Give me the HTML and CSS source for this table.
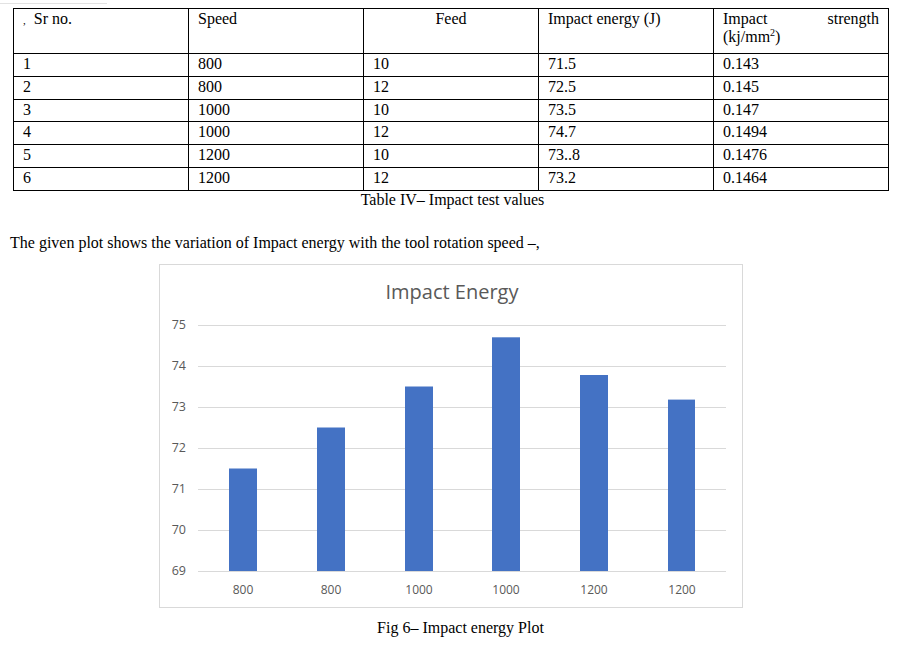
FILE: index.html
```html
<!DOCTYPE html>
<html>
<head>
<meta charset="utf-8">
<link rel="stylesheet" href="styles.css">
</head>
<body>
<div class="topline"></div>
<div class="table-wrap">
  <table class="data">
    <colgroup><col><col><col><col><col></colgroup>
    <tr class="head">
      <td><span class="comma">,</span>&nbsp; Sr no.</td>
      <td>Speed</td>
      <td class="center">Feed</td>
      <td>Impact energy (J)</td>
      <td class="just">Impact strength<br>(kj/mm<sup>2</sup>)</td>
    </tr>
    <tr><td>1</td><td>800</td><td>10</td><td>71.5</td><td>0.143</td></tr>
    <tr><td>2</td><td>800</td><td>12</td><td>72.5</td><td>0.145</td></tr>
    <tr><td>3</td><td>1000</td><td>10</td><td>73.5</td><td>0.147</td></tr>
    <tr><td>4</td><td>1000</td><td>12</td><td>74.7</td><td>0.1494</td></tr>
    <tr><td>5</td><td>1200</td><td>10</td><td>73..8</td><td>0.1476</td></tr>
    <tr><td>6</td><td>1200</td><td>12</td><td>73.2</td><td>0.1464</td></tr>
  </table>
  <div class="caption">Table IV– Impact test values</div>
</div>
<p class="para">The given plot shows the variation of Impact energy with the tool rotation speed –,</p>
<div class="chart">
  <svg width="582" height="342" viewBox="0 0 582 342">
    <text class="title" x="292" y="34" text-anchor="middle">Impact Energy</text>
    <g class="grid">
      <line x1="38" y1="60.5" x2="566" y2="60.5"/>
      <line x1="38" y1="101.5" x2="566" y2="101.5"/>
      <line x1="38" y1="142.5" x2="566" y2="142.5"/>
      <line x1="38" y1="183.5" x2="566" y2="183.5"/>
      <line x1="38" y1="224.5" x2="566" y2="224.5"/>
      <line x1="38" y1="265.5" x2="566" y2="265.5"/>
      <line x1="38" y1="306.5" x2="566" y2="306.5"/>
    </g>
    <g class="ylab" text-anchor="end">
      <text x="26" y="64">75</text>
      <text x="26" y="105">74</text>
      <text x="26" y="146">73</text>
      <text x="26" y="187">72</text>
      <text x="26" y="228">71</text>
      <text x="26" y="269">70</text>
      <text x="26" y="310">69</text>
    </g>
    <g class="bars">
      <rect x="69" y="203.5" width="28" height="102.5"/>
      <rect x="157" y="162.5" width="28" height="143.5"/>
      <rect x="245" y="121.5" width="28" height="184.5"/>
      <rect x="332" y="72.3" width="28" height="233.7"/>
      <rect x="420" y="110" width="28" height="196"/>
      <rect x="508" y="134.6" width="27" height="171.4"/>
    </g>
    <g class="xlab" text-anchor="middle">
      <text x="83" y="329">800</text>
      <text x="171" y="329">800</text>
      <text x="259" y="329">1000</text>
      <text x="346" y="329">1000</text>
      <text x="434" y="329">1200</text>
      <text x="522" y="329">1200</text>
    </g>
  </svg>
</div>
<div class="figcap">Fig 6– Impact energy Plot</div>
</body>
</html>
```
FILE: styles.css
```css
html, body {
  margin: 0;
  padding: 0;
  background: #ffffff;
}
body {
  font-family: "Liberation Serif", "Times New Roman", serif;
  font-size: 16px;
  line-height: 18.4px;
  color: #000;
}
.topline {
  width: 107px;
  height: 0;
  margin-top: 3px;
  border-top: 1px solid #e2e2e2;
}
.table-wrap {
  margin: 4px 0 0 13px;
  width: 876px;
}
.data {
  border-collapse: collapse;
  table-layout: fixed;
  width: 876px;
}
.data col {
  width: 20%;
}
.data td {
  border: 1px solid #000;
  padding: 1px 9px 0 9px;
  vertical-align: top;
  text-align: left;
  height: 20.8px;
  line-height: 18.4px;
}
.data tr.head td {
  height: 43px;
}
.data td.center {
  text-align: center;
}
.data td.just {
  text-align: justify;
  text-align-last: justify;
}
.data sup {
  font-size: 10px;
  line-height: 0;
  vertical-align: 6px;
}
.comma {
  font-size: 11px;
}
.caption {
  text-align: center;
  padding-left: 3px;
}
.para {
  margin: 25px 0 0 10px;
}
.chart {
  width: 582px;
  height: 342px;
  margin: 11px 0 0 159px;
  border: 1px solid #d9d9d9;
}
.chart svg {
  display: block;
}
.title {
  font-family: "Open Sans", sans-serif;
  font-size: 20px;
  fill: #595959;
}
.grid line {
  stroke: #d9d9d9;
  stroke-width: 1;
}
.ylab text, .xlab text {
  font-family: "Open Sans", sans-serif;
  font-size: 12px;
  fill: #595959;
}
.ylab text {
  font-size: 12.5px;
}
.bars rect {
  fill: #4472c4;
}
.figcap {
  width: 897px;
  margin-top: 11px;
  padding-left: 24px;
  box-sizing: border-box;
  text-align: center;
}
```
